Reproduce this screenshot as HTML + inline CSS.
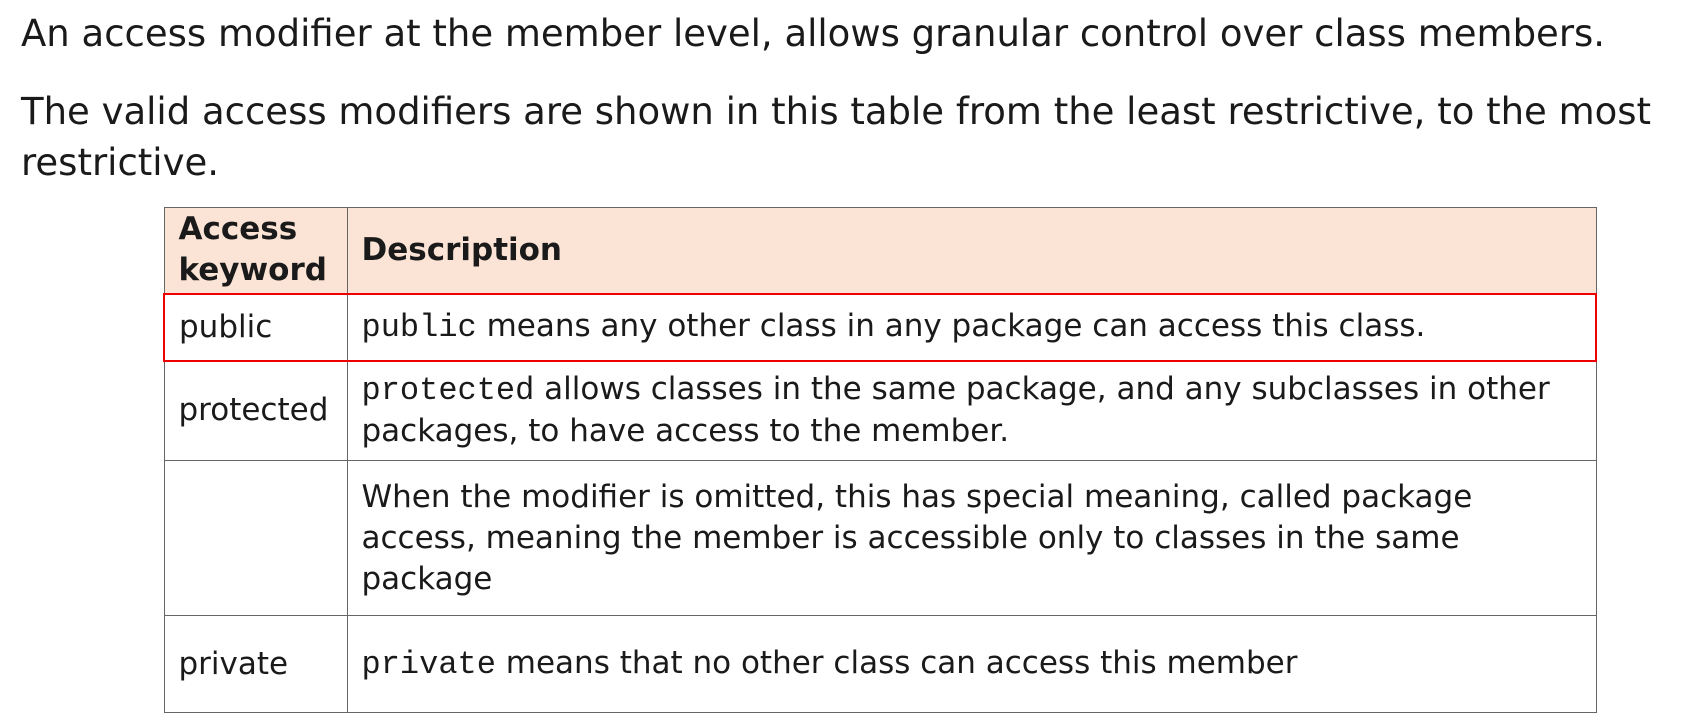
<!DOCTYPE html>
<html><head><meta charset="utf-8"><style>
body{margin:0;width:1681px;height:728px;background:#fff;overflow:hidden;font-family:"DejaVu Sans","Liberation Sans",sans-serif;color:#1a1a1a;position:relative}
.p{position:absolute;left:21px;font-size:37px;line-height:51px;margin:0;white-space:nowrap;letter-spacing:0px}
table{position:absolute;left:163px;top:207px;width:1434px;border-collapse:collapse;font-size:31px}
td,th{border:1.5px solid #666;padding:0 0 0 14px;text-align:left;vertical-align:middle;line-height:41px;white-space:nowrap}
th{background:#fbe4d6;font-weight:bold}
code{font-family:"Liberation Mono","DejaVu Sans Mono",monospace;font-size:32px}
tr.r td{border-top:2.5px solid #e00;border-bottom:2.5px solid #e00}
tr.r td:first-child{border-left:2.5px solid #e00}
tr.r td:last-child{border-right:2.5px solid #e00}
</style></head><body>
<p class="p" style="top:8px">An access modifier at the member level, allows granular control over class members.</p>
<p class="p" style="top:86px">The valid access modifiers are shown in this table from the least restrictive, to the most<br>restrictive.</p>
<table>
<tr style="height:86px"><th style="width:168px">Access<br>keyword</th><th>Description</th></tr>
<tr class="r" style="height:67px"><td>public</td><td><code>public</code> means any other class in any package can access this class.</td></tr>
<tr style="height:100px"><td>protected</td><td><code>protected</code> allows classes in the same package, and any subclasses in other<br>packages, to have access to the member.</td></tr>
<tr style="height:155px"><td></td><td>When the modifier is omitted, this has special meaning, called package<br>access, meaning the member is accessible only to classes in the same<br>package</td></tr>
<tr style="height:97px"><td>private</td><td><code>private</code> means that no other class can access this member</td></tr>
</table>
</body></html>
